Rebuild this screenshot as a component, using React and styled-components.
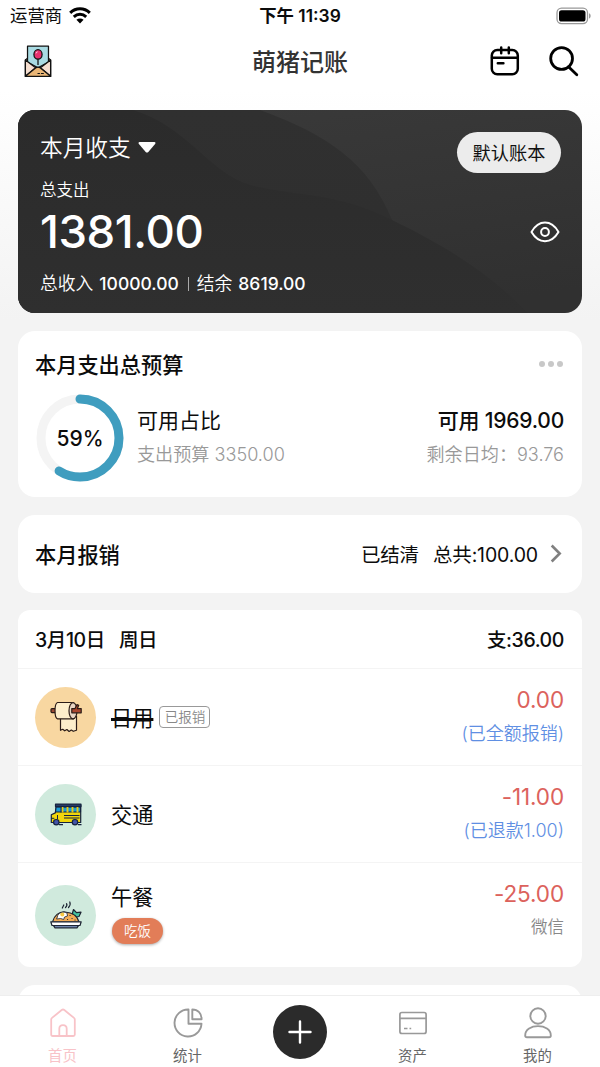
import React from 'react'
import styled, { createGlobalStyle } from 'styled-components'

const cuentas = [
  { nombre: '日用', icono: 'papel', fondo: '#f8d7a1', tachado: true, sello: '已报销', monto: '0.00', nota: '(已全额报销)', alto: 97 },
  { nombre: '交通', icono: 'bus', fondo: '#d0eadd', monto: '-11.00', nota: '(已退款1.00)', alto: 97 },
  { nombre: '午餐', icono: 'comida', fondo: '#d0eadd', etiqueta: '吃饭', monto: '-25.00', nota: '微信', gris: true, alto: 105 },
]

const Wifi = () => (
  <svg width="22" height="17" viewBox="0 0 22 17" fill="none" stroke="#000" strokeWidth="3">
    <path d="M1.2 5.8C6.8.4 15.2.4 20.8 5.8" />
    <path d="M4.800 9.800c3.600-3.300 8.800-3.300 12.400 0" />
    <path d="M11 16.400l-3.600-3.600c2.100-1.700 5.100-1.700 7.200 0z" fill="#000" stroke="none" />
  </svg>
)

const Bateria = () => (
  <svg width="36" height="18" viewBox="0 0 36 18">
    <rect x="1" y="1.200" width="30.500" height="15.400" rx="4.500" fill="none" stroke="#999" strokeWidth="1.300" />
    <rect x="3" y="3.200" width="26.500" height="11.400" rx="2.600" fill="#000" />
    <path d="M33 6.300c2.200.6 2.200 4.700 0 5.300z" fill="#999" />
  </svg>
)

const Sobre = () => (
  <svg width="28" height="33" viewBox="0 0 28 34" stroke="#111" strokeWidth="1.300" strokeLinejoin="round">
    <path d="M1 15.500l3-2.500h20l3 2.500V32.300H1z" fill="#f2d8c4" />
    <path d="M3.200 1.200h21.600v16.500L14 23.500 3.200 17.700z" fill="#a9dbe3" />
    <path d="M1 15.500l10.500 8L1 32.300zM27 15.500l-10.500 8L27 32.300z" fill="#f6dfd0" />
    <path d="M1 32.300l10.500-8.500q2.500-2 5 0L27 32.300z" fill="#eab676" />
    <path d="M14 14.500v6" />
    <ellipse cx="14" cy="9.700" rx="4.200" ry="4.900" fill="#e8316e" />
    <path d="M12 8.600q.3-1.400 1.600-1.600" stroke="#fff" strokeWidth=".8" fill="none" />
    <path d="M13.500 29.300h2.500M17 29.300h3" strokeWidth="1.100" />
  </svg>
)

const Calendario = () => (
  <svg width="30" height="30" viewBox="0 0 30 30" fill="none" stroke="#000" strokeWidth="2.500" strokeLinecap="round">
    <rect x="1.800" y="4" width="26" height="24.300" rx="5.500" />
    <path d="M2 11.800h25.600M11.200 1.600v5.600M18.800 1.600v5.600M7.800 17.300h5.600" />
  </svg>
)

const Lupa = () => (
  <svg width="30" height="31" viewBox="0 0 30 31" fill="none" stroke="#000" strokeWidth="2.800" strokeLinecap="round">
    <circle cx="12.600" cy="12.500" r="10.900" />
    <path d="M19.500 20.800l8.300 8" />
  </svg>
)

const Ojo = () => (
  <svg width="30" height="22" viewBox="0 0 30 22" fill="none" stroke="#fff" strokeWidth="2">
    <path d="M1.500 11C5 5 10 1.600 15 1.600S25 5 28.500 11C25 17 20 20.200 15 20.200S5 17 1.500 11z" strokeLinejoin="round" />
    <circle cx="15" cy="11" r="3.900" />
  </svg>
)

const Anillo = () => (
  <svg width="88" height="88" viewBox="0 0 88 88" fill="none" strokeWidth="9">
    <circle cx="44" cy="44" r="39" stroke="#f4f4f4" />
    <circle cx="44" cy="44" r="39" stroke="#3f9dbf" strokeLinecap="round" pathLength="100" strokeDasharray="59 100" transform="rotate(-90 44 44)" />
  </svg>
)

const Ondas = styled.svg`
  position: absolute;
  left: 0;
  top: 0;
  z-index: -1;
`

const FondoTarjeta = () => (
  <Ondas width="564" height="203" viewBox="0 0 564 203">
    <defs>
      <linearGradient id="claro" x1="0.300" y1="0" x2="0.700" y2="1">
        <stop offset="0" stopColor="#393939" />
        <stop offset="1" stopColor="#303030" />
      </linearGradient>
      <linearGradient id="medio" x1="0" y1="0" x2="0" y2="1">
        <stop offset="0" stopColor="#303030" />
        <stop offset="1" stopColor="#2e2e2e" />
      </linearGradient>
      <linearGradient id="bajo" x1="0" y1="0" x2="0" y2="1">
        <stop offset="0" stopColor="#2b2b2b" />
        <stop offset="1" stopColor="#2f2f2f" />
      </linearGradient>
    </defs>
    <rect width="564" height="203" fill="url(#claro)" />
    <path d="M0 0H242C310 25 350 52 374 110C384 135 390 158 398 203H0z" fill="url(#medio)" />
    <path d="M0 0H115C170 17 190 62 232 75C280 87 320 82 374 110C430 137 472 164 510 203H0z" fill="url(#bajo)" />
  </Ondas>
)

const Papel = () => (
  <svg width="32" height="32" viewBox="0 0 32 32" stroke="#2b1c17" strokeWidth="1.200" strokeLinejoin="round">
    <rect x="1" y="7.600" width="5" height="4" rx="1" fill="#9b4a35" />
    <path d="M10.500 17v12.300l2.200-1 2 1.500 2.200-1.300 2.200 2 2.200-1.500 2 1.300 3.200-1V15z" fill="#fdeecb" />
    <path d="M7.500 1.500h16v16.300h-16C4.200 17 4.200 2.500 7.500 1.500z" fill="#fdeecb" />
    <ellipse cx="23" cy="9.700" rx="4" ry="8.100" fill="#e9d5c4" />
    <path d="M21.800 7.600h3.200l2-4 1.700.7-1.300 3.300h3.800v4.200h-9.400z" fill="#a9452f" />
  </svg>
)

const Bus = () => (
  <svg width="32" height="23" viewBox="0 0 32 23" stroke="#16233f" strokeWidth="1.200" strokeLinejoin="round">
    <path d="M1.300 19.500v-7.800l4-1.800L6.700 2h24v17.500z" fill="#f0d60c" />
    <path d="M6 4h24.500v5H5.500z" fill="#199bd4" />
    <path d="M5.500 1.200h25.500v2.400H5.500z" fill="#253a66" />
    <path d="M12.500 4v5.500M17.500 4v5.500M22.500 4v5.500M27.500 4v5.500" stroke="#e8c914" strokeWidth="1.900" />
    <path d="M11 3.500v6M7.500 12v4M14 12.500h15.500M14 15h15.500M1.300 15.300h3" fill="none" strokeWidth="1" />
    <path d="M9 21.700h4M28 21.700h3.500" fill="none" />
    <circle cx="6.300" cy="19.200" r="2.700" fill="#4454a8" />
    <circle cx="25" cy="19.200" r="2.700" fill="#4454a8" />
  </svg>
)

const Comida = () => (
  <svg width="32" height="28" viewBox="0 0 32 28" stroke="#1d2533" strokeWidth="1.200" strokeLinejoin="round" strokeLinecap="round">
    <path d="M12.300 7l1.500-3M15.500 6.500q2.200-2 1-3.800M18.500 6.500q2.500-3 1.300-5.500" fill="none" />
    <path d="M22.500 12l1-3.500 3 3.200 4.500-.5-2 4.300-5.500 1z" fill="#44c4a1" />
    <path d="M2.500 21C4 14.500 9 10.500 15 11S27.300 14.500 29 21z" fill="#f3ac54" />
    <path d="M8 14c2-3 6-3.500 9-2l.5 3-3 1-.8 2.500-3-1L7 18z" fill="#fff" strokeWidth=".8" />
    <circle cx="12.300" cy="13.600" r="2" fill="#f6c944" stroke="none" />
    <path d="M20 14.500h.1M22 17.500h.1M25 19h.1M17.500 18.500h.1" />
    <path d="M.8 20.800h30.400L30 24.500H2z" fill="#fff" />
    <path d="M3.500 24.700h25l-1.500 2.200H5z" fill="#8ea8da" />
  </svg>
)

const dibujos = { papel: <Papel />, bus: <Bus />, comida: <Comida /> }

const Casa = () => (
  <svg width="26" height="30" viewBox="0 0 26 30" fill="none" stroke="currentColor" strokeWidth="1.800" strokeLinejoin="round">
    <path d="M1.200 11.500q0-1 .8-1.600L11.700 2q1.300-1 2.600 0L24 9.900q.8.600.8 1.600v15q0 1.500-1.500 1.500H2.700q-1.500 0-1.500-1.500z" />
    <path d="M9.300 28v-7.200c0-4.800 7.400-4.800 7.400 0V28" />
  </svg>
)

const Grafico = () => (
  <svg width="30" height="30" viewBox="0 0 30 30" fill="none" stroke="currentColor" strokeWidth="1.900" strokeLinejoin="round">
    <path d="M15.500 1.500A13.500 13.500 0 1 0 28.500 15.700H15.500z" />
    <path d="M19.300 1.500v9.700h9.300C28.600 5.500 25 1.500 19.300 1.500z" />
  </svg>
)

const Banco = () => (
  <svg width="28" height="30" viewBox="0 0 28 30" fill="none" stroke="currentColor" strokeWidth="1.700">
    <rect x=".9" y="4.500" width="26.200" height="21" rx="2" />
    <path d="M1 10.300h26M5 20.500h3.500M10.500 20.500h1.700" />
  </svg>
)

const Persona = () => (
  <svg width="28" height="32" viewBox="0 0 28 32" fill="none" stroke="currentColor" strokeWidth="1.900" strokeLinejoin="round">
    <circle cx="14" cy="9" r="7.700" />
    <path d="M1.200 28.500C.8 16 27.200 16 26.800 28.500q0 1.800-1.800 1.800H3q-1.800 0-1.800-1.800z" />
  </svg>
)

const App = () => {
  return (
    <>
      <Global />
      <Pantalla>
        <BarraEstado>
          <Operador>运营商 <Wifi /></Operador>
          <Hora>下午 11:39</Hora>
          <Bateria />
        </BarraEstado>

        <Cabecera>
          <Sobre />
          <Titulo>萌猪记账</Titulo>
          <Acciones><Calendario /><Lupa /></Acciones>
        </Cabecera>

        <Contenido>
          <Resumen>
            <FondoTarjeta />
            <Periodo>
              <span>本月收支</span>
              <svg width="18" height="11" viewBox="0 0 18 11"><path d="M1.500 0h15q1.500.3.800 1.700l-7 8.300q-1.300 1-2.600 0l-7-8.300Q0 .3 1.500 0z" fill="#fff" /></svg>
            </Periodo>
            <Libro>默认账本</Libro>
            <Rotulo>总支出</Rotulo>
            <FilaTotal>
              <Total>1381.00</Total>
              <Ojo />
            </FilaTotal>
            <Balance>
              <span>总收入</span><b>10000.00</b><Barra /><span>结余</span><b>8619.00</b>
            </Balance>
          </Resumen>

          <Presupuesto>
            <Fila>
              <Subtitulo>本月支出总预算</Subtitulo>
              <Puntos><i /><i /><i /></Puntos>
            </Fila>
            <Detalle>
              <Progreso><Anillo /><Porcentaje>59%</Porcentaje></Progreso>
              <Columna>
                <Dato>可用占比</Dato>
                <Gris>支出预算 3350.00</Gris>
              </Columna>
              <Columna $derecha>
                <Dato $fuerte>可用 1969.00</Dato>
                <Gris>剩余日均：93.76</Gris>
              </Columna>
            </Detalle>
          </Presupuesto>

          <Reembolso>
            <Subtitulo>本月报销</Subtitulo>
            <Estado>
              <span>已结清</span>
              <span>总共:100.00</span>
              <svg width="12" height="19" viewBox="0 0 12 19" fill="none" stroke="#808080" strokeWidth="2.600"><path d="M1.700 1.500l8 8-8 8" /></svg>
            </Estado>
          </Reembolso>

          <Dia>
            <Fecha>
              <div><span>3月10日</span><span>周日</span></div>
              <span>支:36.00</span>
            </Fecha>
            {cuentas.map((c) => (
              <Movimiento key={c.nombre} $alto={c.alto}>
                <Circulo $fondo={c.fondo}>{dibujos[c.icono]}</Circulo>
                <Concepto $columna={c.etiqueta}>
                  <Nombre $tachado={c.tachado}>{c.nombre}</Nombre>
                  {c.sello && <Sello>{c.sello}</Sello>}
                  {c.etiqueta && <Etiqueta>{c.etiqueta}</Etiqueta>}
                </Concepto>
                <Importe>
                  <Monto>{c.monto}</Monto>
                  <Nota $gris={c.gris}>{c.nota}</Nota>
                </Importe>
              </Movimiento>
            ))}
          </Dia>
          <Siguiente />
        </Contenido>

        <Menu>
          <Opcion $activa><Casa /><span>首页</span></Opcion>
          <Opcion><Grafico /><span>统计</span></Opcion>
          <Opcion>
            <Agregar>
              <svg width="24" height="24" viewBox="0 0 24 24" stroke="#fff" strokeWidth="2.400" strokeLinecap="round"><path d="M12 1.500v21M1.500 12h21" /></svg>
            </Agregar>
          </Opcion>
          <Opcion><Banco /><span>资产</span></Opcion>
          <Opcion><Persona /><span>我的</span></Opcion>
        </Menu>
      </Pantalla>
    </>
  )
}

const Global = createGlobalStyle`
  * { box-sizing: border-box; }
  body {
    margin: 0;
    font-family: Inter, "Noto Sans CJK SC", sans-serif;
    color: #0c0c0c;
  }
  svg { display: block; flex: none; }
`

const Pantalla = styled.div`
  width: 600px;
  height: 1067px;
  overflow: hidden;
  display: flex;
  flex-direction: column;
  white-space: nowrap;
  background: linear-gradient(#fff 90px, #f3f3f3 320px);
`

const BarraEstado = styled.div`
  height: 31px;
  flex: none;
  padding: 0 8px 0 10px;
  display: grid;
  grid-template-columns: 1fr auto 1fr;
  align-items: center;
  font-size: 17.4px;
  line-height: 30px;

  > svg { justify-self: end; }
`

const Operador = styled.div`
  display: flex;
  align-items: center;
  gap: 7px;
`

const Hora = styled.div`
  font-size: 17.400px;
  font-weight: 600;
  margin-right: 2px;
`

const Cabecera = styled.header`
  height: 61px;
  flex: none;
  padding: 0 21px 1px 24px;
  display: grid;
  grid-template-columns: 1fr auto 1fr;
  align-items: center;
`

const Titulo = styled.h1`
  margin: 3px 3px 0 0;
  font-size: 24px;
  line-height: 30px;
  font-weight: 500;
  color: #333;
`

const Acciones = styled.div`
  display: flex;
  justify-content: flex-end;
  align-items: center;
  gap: 29px;
`

const Contenido = styled.main`
  flex: 1;
  min-height: 0;
  overflow: hidden;
  padding: 18px 18px 0;
`

const Resumen = styled.section`
  position: relative;
  z-index: 0;
  height: 203px;
  border-radius: 17px;
  overflow: hidden;
  padding: 19px 22px 0;
  color: #fff;
`

const Periodo = styled.div`
  display: flex;
  align-items: center;
  gap: 7px;
  height: 34px;
  font-size: 22.700px;
  font-weight: 350;

  svg { margin-top: 2px; }
`

const Libro = styled.button`
  position: absolute;
  right: 21px;
  top: 22px;
  width: 104px;
  height: 41px;
  padding: 0;
  border: none;
  border-radius: 21px;
  background: #ececec;
  color: #111;
  font: 400 18.200px/42px Inter, "Noto Sans CJK SC", sans-serif;
`

const Rotulo = styled.div`
  margin-top: 15px;
  font-size: 16.500px;
  line-height: 24px;
  font-weight: 350;
`

const FilaTotal = styled.div`
  display: flex;
  justify-content: space-between;
  align-items: center;
  height: 60px;
`

const Total = styled.div`
  font-size: 45.500px;
  font-weight: 500;
  letter-spacing: -0.4px;
  margin-top: -1px;
`

const Balance = styled.div`
  display: flex;
  align-items: center;
  margin-top: 9px;
  font-size: 17.800px;
  line-height: 26px;
  font-weight: 350;

  b {
    font-weight: 500;
    font-size: 17.500px;
    margin-left: 6px;
  }
`

const Barra = styled.i`
  width: 1px;
  height: 14px;
  margin: 0 8px 0 9px;
  background: #aaa;
`

const Tarjeta = styled.section`
  background: #fff;
  border-radius: 17px;
  margin-top: 18px;
  padding: 0 18px;
`

const Presupuesto = styled(Tarjeta)`
  height: 166px;
  padding-top: 17px;
`

const Fila = styled.div`
  display: flex;
  justify-content: space-between;
  align-items: center;
`

const Subtitulo = styled.h2`
  margin: 0 0 0 -1px;
  padding-top: 1px;
  font-size: 21.200px;
  line-height: 32px;
  font-weight: 500;
`

const Puntos = styled.div`
  display: flex;
  gap: 3px;
  margin: 0 1px 2px 0;

  i {
    width: 6px;
    height: 6px;
    border-radius: 50%;
    background: #c8c8c8;
  }
`

const Detalle = styled.div`
  display: flex;
  align-items: center;
  margin-top: 13px;
`

const Progreso = styled.div`
  display: grid;
  place-items: center;
  width: 88px;
  margin-right: 13px;

  > * { grid-area: 1 / 1; }
`

const Porcentaje = styled.div`
  font-size: 21px;
  font-weight: 500;
`

const Columna = styled.div`
  margin-left: ${(p) => (p.$derecha ? 'auto' : '0')};
  text-align: ${(p) => (p.$derecha ? 'right' : 'left')};
`

const Dato = styled.div`
  font-size: 21px;
  line-height: 32px;
  letter-spacing: ${(p) => (p.$fuerte ? '-0.2px' : '0')};
  font-weight: ${(p) => (p.$fuerte ? 500 : 400)};
`

const Gris = styled.div`
  font-size: 18.100px;
  line-height: 34px;
  font-weight: 350;
  color: #999;
`

const Reembolso = styled(Tarjeta)`
  height: 78px;
  display: flex;
  align-items: center;
  justify-content: space-between;
`

const Estado = styled.div`
  display: flex;
  align-items: center;
  gap: 14px;
  font-size: 19.500px;
  letter-spacing: -0.15px;
  padding: 0 2px 1px 0;

  svg { margin-left: -2px; }
`

const Dia = styled(Tarjeta)`
  height: 357px;
  margin-top: 17px;
  padding: 0;
  border-radius: 12px;
`

const Fecha = styled.div`
  height: 58px;
  padding: 0 18px 1px 17px;
  display: flex;
  align-items: center;
  justify-content: space-between;
  font-size: 19.500px;
  letter-spacing: -0.4px;
  font-weight: 500;

  div {
    display: flex;
    gap: 14px;
  }
`

const Movimiento = styled.div`
  height: ${(p) => p.$alto}px;
  display: flex;
  align-items: center;
  padding: 0 18px 0 17px;
  border-top: 1px solid #f4f4f4;
`

const Circulo = styled.div`
  width: 61px;
  height: 61px;
  border-radius: 50%;
  display: flex;
  align-items: center;
  justify-content: center;
  background: ${(p) => p.$fondo};
`

const Concepto = styled.div`
  flex: 1;
  display: flex;
  flex-direction: ${(p) => (p.$columna ? 'column' : 'row')};
  align-items: ${(p) => (p.$columna ? 'flex-start' : 'center')};
  gap: ${(p) => (p.$columna ? 5 : 6)}px;
  margin: 0 0 ${(p) => (p.$columna ? 6 : 0)}px 15px;
`

const Nombre = styled.div`
  font-size: 21.200px;
  line-height: 32px;
  padding-top: 1px;
  text-decoration: ${(p) => (p.$tachado ? 'line-through 2.500px' : 'none')};
`

const Sello = styled.div`
  width: 51px;
  height: 22px;
  border: 1px solid #999;
  border-radius: 4px;
  font-size: 13.500px;
  line-height: 20px;
  font-weight: 350;
  text-align: center;
  color: #888;
`

const Etiqueta = styled.div`
  width: 51px;
  height: 26px;
  margin-left: 1px;
  border-radius: 13px;
  background: #e27d58;
  box-shadow: 0 1px 3px #0005;
  color: #fff;
  font-size: 13.500px;
  font-weight: 350;
  line-height: 26px;
  text-align: center;
`

const Importe = styled.div`
  align-self: flex-start;
  padding-top: 15px;
  text-align: right;
`

const Monto = styled.div`
  font-size: 22.500px;
  line-height: 32px;
  letter-spacing: -0.1px;
  color: #dc625c;
`

const Nota = styled.div`
  font-size: ${(p) => (p.$gris ? 16.5 : 18)}px;
  line-height: 35px;
  font-weight: 350;
  color: ${(p) => (p.$gris ? '#888' : '#5f8fe3')};
`

const Siguiente = styled(Tarjeta)`
  height: 60px;
`

const Menu = styled.nav`
  height: 72px;
  flex: none;
  display: grid;
  grid-template-columns: 125px 125px 100px 125px 125px;
  background: #fff;
  border-top: 1px solid #eee;
`

const Opcion = styled.div`
  display: flex;
  flex-direction: column;
  align-items: center;
  color: ${(p) => (p.$activa ? '#f8c3c8' : '#999')};

  > svg { height: 32px; margin-top: 11px; }

  span {
    font-size: 14.400px;
    line-height: 20px;
    margin-top: 7px;
    color: ${(p) => (p.$activa ? '#f8c3c8' : '#666')};
  }
`

const Agregar = styled.div`
  width: 54px;
  height: 54px;
  margin-top: 9px;
  border-radius: 50%;
  background: #2b2b2b;
  display: flex;
  align-items: center;
  justify-content: center;
`

export default App
